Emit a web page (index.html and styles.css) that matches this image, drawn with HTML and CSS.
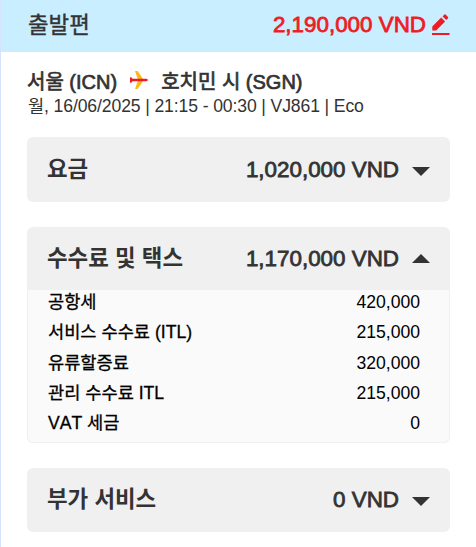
FILE: index.html
```
<!DOCTYPE html>
<html lang="ko">
<head>
    <meta charset="UTF-8">
    <meta name="viewport" content="width=device-width, initial-scale=1.0">
    <title>출발편</title>
    <link rel="stylesheet" href="styles.css">
</head>
<body>
    <div class="summary">
        <div class="summary-header">
            <span class="summary-title">출발편</span>
            <span class="summary-total">2,190,000 VND</span>
            <svg class="edit-icon" width="18" height="22" viewBox="0 0 18 22">
                <path d="M0.3 12.5 L9.2 3.6 L13.1 7.5 L4.2 16.4 H0.3 Z M10.6 2.4 L12.4 0.6 Q13 0 13.6 0.6 L16 3 Q16.6 3.7 16 4.3 L14.3 6 Z" fill="#ee1c25"/>
                <rect x="0" y="19" width="17.5" height="2" fill="#ee1c25"/>
            </svg>
        </div>
        <div class="summary-body">
            <div class="route">
                <span>서울 (ICN)</span>
                <svg class="plane-icon" width="18" height="18" viewBox="0 0 18 18">
                    <path d="M5 0 H7.6 L12.6 7.2 V10.8 L7.6 18 H5 L7.6 10.5 V7.5 Z" fill="#fdb913"/>
                    <path d="M0 6.2 H1.2 L2.6 7.8 H16 Q18 8 18 9 Q18 10 16 10.2 H2.6 L1.2 11.8 H0 Z" fill="#ee1c25"/>
                </svg>
                <span>호치민 시 (SGN)</span>
            </div>
            <div class="flight-info">월, 16/06/2025 | 21:15 - 00:30 | VJ861 | Eco</div>

            <div class="fare-card">
                <div class="fare-head">
                    <span class="fare-name">요금</span>
                    <span class="fare-price">1,020,000 VND</span>
                    <span class="arrow arrow-down"></span>
                </div>
            </div>

            <div class="fare-card">
                <div class="fare-head fare-head-open">
                    <span class="fare-name">수수료 및 택스</span>
                    <span class="fare-price">1,170,000 VND</span>
                    <span class="arrow arrow-up"></span>
                </div>
                <div class="fare-list">
                    <div class="fare-row"><span class="row-name">공항세</span><span>420,000</span></div>
                    <div class="fare-row"><span class="row-name">서비스 수수료 (ITL)</span><span>215,000</span></div>
                    <div class="fare-row"><span class="row-name">유류할증료</span><span>320,000</span></div>
                    <div class="fare-row"><span class="row-name">관리 수수료 ITL</span><span>215,000</span></div>
                    <div class="fare-row"><span class="row-name row-name-vat">VAT 세금</span><span>0</span></div>
                </div>
            </div>

            <div class="fare-card">
                <div class="fare-head fare-head-last">
                    <span class="fare-name">부가 서비스</span>
                    <span class="fare-price">0 VND</span>
                    <span class="arrow arrow-down"></span>
                </div>
            </div>
        </div>
    </div>
</body>
</html>
```
FILE: styles.css
```
* {
    box-sizing: border-box;
}

body {
    margin: 0;
    background-color: #fff;
    color: #333;
    font-family: "Liberation Sans", "Noto Sans CJK KR", sans-serif;
}

.summary {
    height: 547px;
    border-left: 1px solid #d5e3ff;
    overflow: hidden;
}

/* header */
.summary-header {
    display: flex;
    align-items: center;
    height: 52px;
    padding: 0 26px 2px 27px;
    background-color: #c9eeff;
    font-size: 22.4px;
    line-height: 34px;
}

.summary-title {
    flex: 1;
    padding-top: 2px;
    -webkit-text-stroke: 0.4px #333;
}

.summary-total {
    color: #ee1c25;
    -webkit-text-stroke: 0.8px #ee1c25;
}

.edit-icon {
    margin-left: 6px;
}

.summary-body {
    padding: 17px 26px 0;
}

/* route */
.route {
    display: flex;
    align-items: center;
    height: 26px;
    padding-left: 0;
    font-size: 20px;
    line-height: 26px;
    -webkit-text-stroke: 0.7px #333;
}

.plane-icon {
    margin: 0 13px 4px 13px;
    -webkit-text-stroke: 0;
}

.flight-info {
    height: 22px;
    margin-bottom: 20px;
    padding-left: 1px;
    font-size: 17.6px;
    line-height: 22px;
    letter-spacing: -0.12px;
    white-space: nowrap;
}

/* cards */
.fare-card {
    margin-bottom: 25px;
    border-radius: 6px;
    background-color: #f0f0f0;
    overflow: hidden;
}

.fare-head {
    display: flex;
    align-items: center;
    height: 65px;
    padding: 0 20px 0 20px;
    font-size: 22.4px;
    line-height: 34px;
}

.fare-head-open {
    height: 63px;
}

.fare-head-last {
    height: 64px;
}

.fare-name {
    flex: 1;
    font-weight: bold;
}

.fare-price {
    -webkit-text-stroke: 0.8px #333;
}

.arrow {
    margin-left: 13px;
    border-left: 9px solid transparent;
    border-right: 9px solid transparent;
}

.arrow-down {
    margin-top: 3px;
    border-top: 9px solid #333;
}

.arrow-up {
    margin-bottom: 1px;
    border-bottom: 9px solid #333;
}

.fare-list {
    height: 153px;
    border: 1px solid #f0f0f0;
    border-top: 0;
    border-radius: 0 0 6px 6px;
    background-color: #fafafa;
    padding: 0 29px 0 20px;
    color: #000;
    font-size: 17.6px;
}

.fare-row {
    display: flex;
    justify-content: space-between;
    height: 30.4px;
    line-height: 24px;
}

.fare-row:last-child {
    line-height: 22px;
}

.row-name {
    -webkit-text-stroke: 0.3px #000;
}

.row-name-vat {
    font-kerning: none;
}
```
